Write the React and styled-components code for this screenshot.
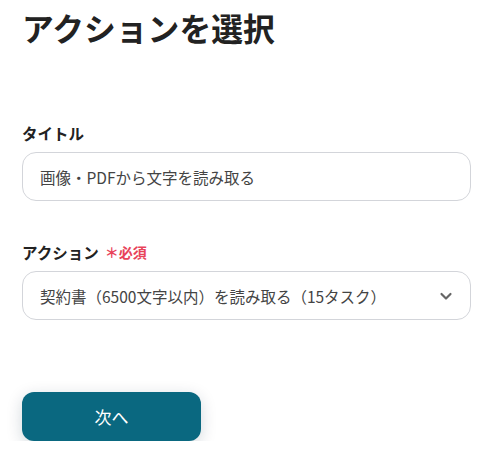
import React from "react";
import styled, { createGlobalStyle } from "styled-components";

const Global = createGlobalStyle`
  html, body { margin: 0; padding: 0; background: #fff; }
  body { font-family: "Noto Sans CJK JP", "Noto Sans", sans-serif; color: #333; }
`;

const Page = styled.div`
  display: flex;
  flex-direction: column;
  padding: 6px 24px 0 22px;
`;

const Title = styled.h1`
  margin: 0;
  font-size: 31.8px;
  font-weight: 700;
  line-height: 42px;
  color: #222;
`;

const Field = styled.div`
  display: flex;
  flex-direction: column;
  gap: 8px;
  margin-top: ${(p) => p.$mt}px;
`;

const Label = styled.div`
  display: flex;
  align-items: center;
  gap: 6px;
  font-size: 15.5px;
  font-weight: 700;
  line-height: 22px;
  color: #222;
`;

const Required = styled.span`
  color: #e8435a;
  font-size: 14px;
  font-weight: 700;
  display: flex;
  align-items: center;
  gap: 2px;
`;

const Box = styled.div`
  box-sizing: border-box;
  height: 49px;
  border: 1px solid #d3d5da;
  border-radius: 14px;
  display: flex;
  align-items: center;
  justify-content: space-between;
  padding: 0 17px 0 17px;
  font-size: 15.5px;
  color: #444;
`;

const Chevron = styled.svg`
  width: 14px;
  height: 14px;
  color: #666;
`;

const Button = styled.button`
  margin-top: 72px;
  width: 179px;
  height: 49px;
  border: none;
  border-radius: 12px;
  background: #0a6880;
  color: #fff;
  font-family: inherit;
  font-size: 17px;
  box-shadow: 0 4px 16px rgba(0, 40, 60, 0.18);
`;

export default function App() {
  return (
    <>
      <Global />
      <Page>
        <Title>アクションを選択</Title>
        <Field $mt={74}>
          <Label>タイトル</Label>
          <Box>画像・PDFから文字を読み取る</Box>
        </Field>
        <Field $mt={40}>
          <Label>
            アクション
            <Required>＊必須</Required>
          </Label>
          <Box>
            契約書（6500文字以内）を読み取る（15タスク）
            <Chevron viewBox="0 0 14 14" fill="none">
              <path d="M2.5 5 L7 9.5 L11.5 5" stroke="currentColor" strokeWidth="2.2" strokeLinecap="round" strokeLinejoin="round" />
            </Chevron>
          </Box>
        </Field>
        <Button>次へ</Button>
      </Page>
    </>
  );
}
